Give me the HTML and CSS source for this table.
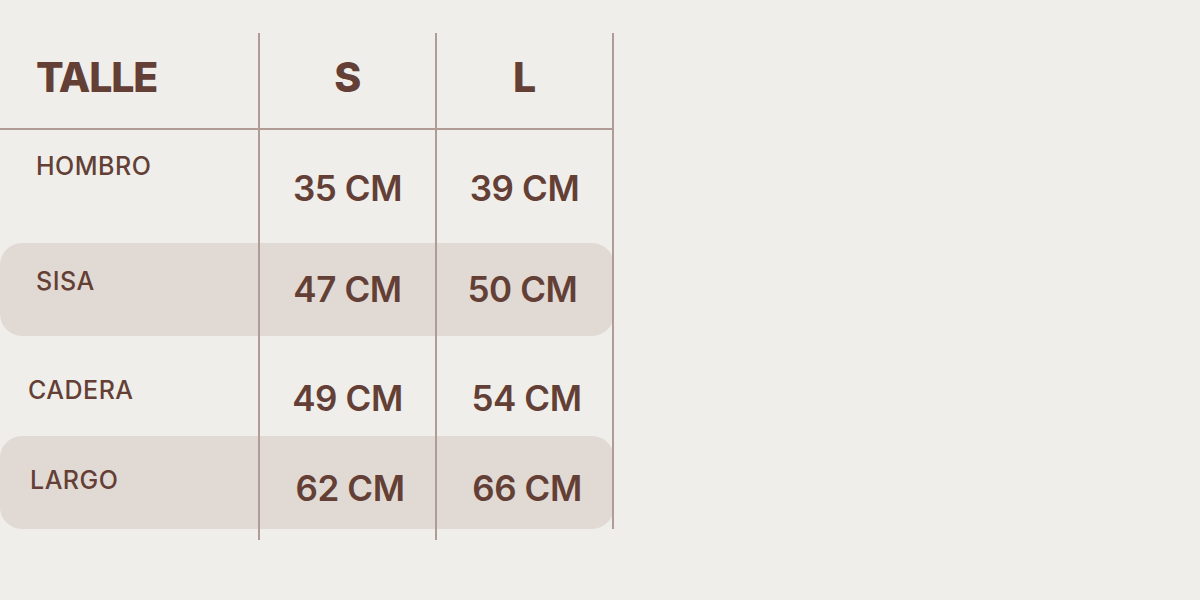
FILE: index.html
```html
<!DOCTYPE html>
<html lang="es">
<head>
<meta charset="utf-8">
<title>Tabla de talles</title>
<link rel="stylesheet" href="styles.css">
</head>
<body>
<div class="chart">
  <div class="row head">
    <div class="cell label">TALLE</div>
    <div class="cell val mid">S</div>
    <div class="cell val last">L</div>
  </div>
  <div class="row r1">
    <div class="cell label">HOMBRO</div>
    <div class="cell val mid">35 CM</div>
    <div class="cell val last">39 CM</div>
  </div>
  <div class="row r2 band">
    <div class="cell label">SISA</div>
    <div class="cell val mid">47 CM</div>
    <div class="cell val last">50 CM</div>
  </div>
  <div class="row r3">
    <div class="cell label">CADERA</div>
    <div class="cell val mid">49 CM</div>
    <div class="cell val last">54 CM</div>
  </div>
  <div class="row r4 band">
    <div class="cell label">LARGO</div>
    <div class="cell val mid">62 CM</div>
    <div class="cell val last">66 CM</div>
  </div>
  <div class="row tail">
    <div class="cell"></div>
    <div class="cell mid"></div>
    <div class="cell mid"></div>
  </div>
</div>
</body>
</html>
```
FILE: styles.css
```css
* { box-sizing: border-box; }
html, body { margin: 0; padding: 0; }
body {
  background: #efeeea;
  width: 1200px;
  height: 600px;
  overflow: hidden;
  font-family: Inter, "Noto Sans", sans-serif;
  color: #633f36;
}
.chart {
  margin-top: 33px;
  width: 614px;
}
.row {
  display: grid;
  grid-template-columns: 258px 177px 179px;
}
.cell {
  line-height: 1;
  white-space: nowrap;
}
.mid { border-left: 2px solid #b09b97; }
.last { border-left: 2px solid #b09b97; border-right: 2px solid #b09b97; }
.band {
  background: #e1d9d3;
  border-radius: 22px;
}
.label {
  font-size: 25px;
  font-weight: 500;
  letter-spacing: 0.5px;
  padding-left: 36px;
}
.val {
  font-size: 35px;
  font-weight: 600;
  letter-spacing: -0.4px;
  text-align: center;
}
.head { height: 97px; border-bottom: 2px solid #b09b97; }
.head .label { font-size: 41px; font-weight: 800; letter-spacing: -1.2px; padding-top: 24px; }
.head .val { font-size: 41px; font-weight: 800; padding-top: 24px; }
.r1 { height: 113px; }
.r1 .label { padding-top: 24px; }
.r1 .val { padding-top: 41px; }
.r2 { height: 93px; }
.r2 .label { padding-top: 26px; }
.r2 .val { padding-top: 29px; }
.r2 .last { padding-right: 4px; }
.r3 { height: 100px; }
.r3 .label { padding-top: 42px; padding-left: 28px; }
.r3 .val { padding-top: 45px; }
.r3 .last { padding-left: 4px; }
.r4 { height: 93px; }
.r4 .label { padding-top: 32px; padding-left: 30px; }
.r4 .val { padding-top: 35px; }
.r4 .mid { padding-left: 5px; }
.r4 .last { padding-left: 5px; }
.tail { height: 11px; }
```
